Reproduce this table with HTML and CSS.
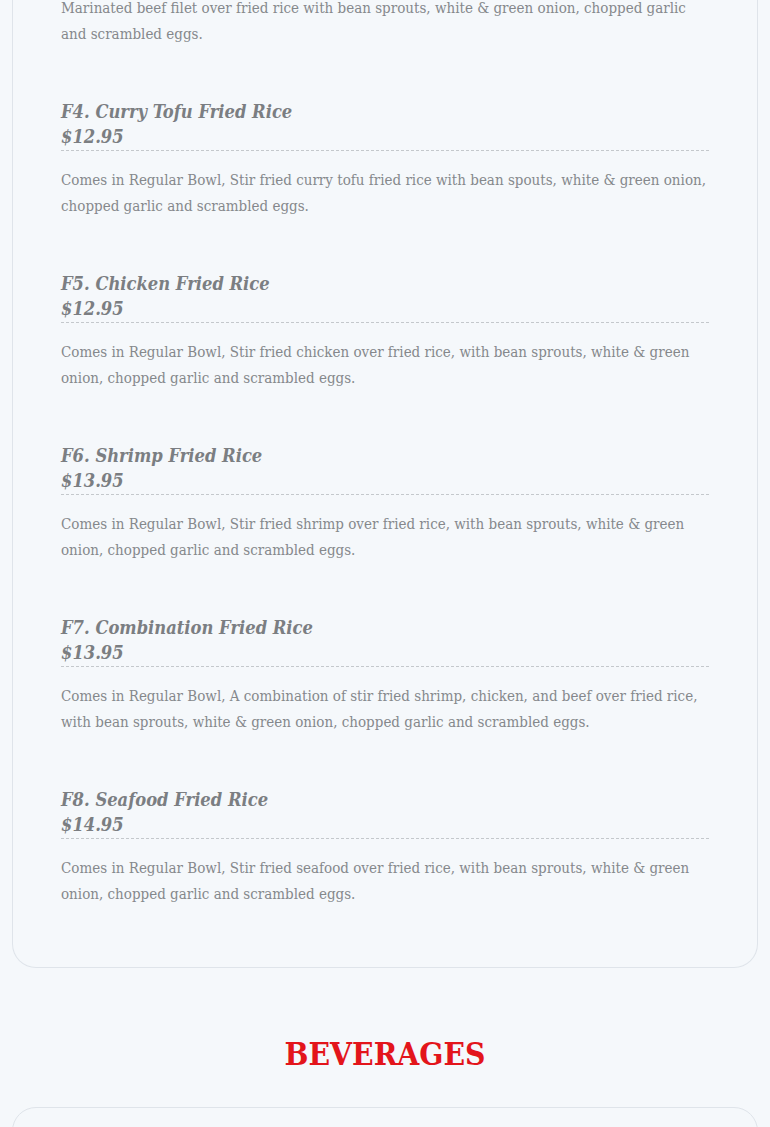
FILE: index.html
```html
<!DOCTYPE html>
<html lang="en">
<head>
<meta charset="utf-8">
<title>Fried Rice</title>
<link rel="stylesheet" href="styles.css">
</head>
<body>
<main class="menu">
  <section class="card card--cut">
    <article class="item">
      <p class="desc">Marinated beef filet over fried rice with bean sprouts, white &amp; green onion, chopped garlic and scrambled eggs.</p>
    </article>
    <article class="item">
      <div class="head">
        <h3 class="name">F4. Curry Tofu Fried Rice</h3>
        <div class="price">$12.95</div>
      </div>
      <p class="desc">Comes in Regular Bowl, Stir fried curry tofu fried rice with bean spouts, white &amp; green onion, chopped garlic and scrambled eggs.</p>
    </article>
    <article class="item">
      <div class="head">
        <h3 class="name">F5. Chicken Fried Rice</h3>
        <div class="price">$12.95</div>
      </div>
      <p class="desc">Comes in Regular Bowl, Stir fried chicken over fried rice, with bean sprouts, white &amp; green onion, chopped garlic and scrambled eggs.</p>
    </article>
    <article class="item">
      <div class="head">
        <h3 class="name">F6. Shrimp Fried Rice</h3>
        <div class="price">$13.95</div>
      </div>
      <p class="desc">Comes in Regular Bowl, Stir fried shrimp over fried rice, with bean sprouts, white &amp; green onion, chopped garlic and scrambled eggs.</p>
    </article>
    <article class="item">
      <div class="head">
        <h3 class="name">F7. Combination Fried Rice</h3>
        <div class="price">$13.95</div>
      </div>
      <p class="desc">Comes in Regular Bowl, A combination of stir fried shrimp, chicken, and beef over fried rice, with bean sprouts, white &amp; green onion, chopped garlic and scrambled eggs.</p>
    </article>
    <article class="item">
      <div class="head">
        <h3 class="name">F8. Seafood Fried Rice</h3>
        <div class="price">$14.95</div>
      </div>
      <p class="desc">Comes in Regular Bowl, Stir fried seafood over fried rice, with bean sprouts, white &amp; green onion, chopped garlic and scrambled eggs.</p>
    </article>
  </section>
  <h2 class="section-title">BEVERAGES</h2>
  <section class="card card--next"></section>
</main>
</body>
</html>
```

FILE: styles.css
```css
html, body {
  margin: 0;
  padding: 0;
  background: #f5f8fb;
}
body {
  font-family: "DejaVu Serif", "Liberation Serif", serif;
  font-stretch: condensed;
  overflow: hidden;
}
.menu {
  padding: 0 12px;
}
.card {
  border: 1px solid #dfe4ea;
  border-radius: 24px;
  background: #f5f8fb;
  padding: 0 48px 60px;
  display: flex;
  flex-direction: column;
  gap: 51px;
}
.card--cut {
  margin-top: -5px;
  border-top: none;
  border-top-left-radius: 0;
  border-top-right-radius: 0;
}
.item {
  display: flex;
  flex-direction: column;
}
.head {
  border-bottom: 1px dashed #c4c8cc;
  margin-bottom: 16px;
}
.name, .price {
  margin: 0;
  font-size: 18.2px;
  line-height: 26px;
  font-style: italic;
  font-weight: bold;
  color: #7b7e82;
}
.name {
  padding-top: 1px;
  line-height: 25px;
}
.desc {
  margin: 0;
  font-size: 15px;
  line-height: 26px;
  color: #85888c;
}
.section-title {
  margin: 68px 0 0;
  text-align: center;
  font-size: 31.5px;
  line-height: 36px;
  font-weight: bold;
  color: #e3151b;
}
.card--next {
  margin-top: 35px;
  height: 200px;
  padding: 0;
}
```
